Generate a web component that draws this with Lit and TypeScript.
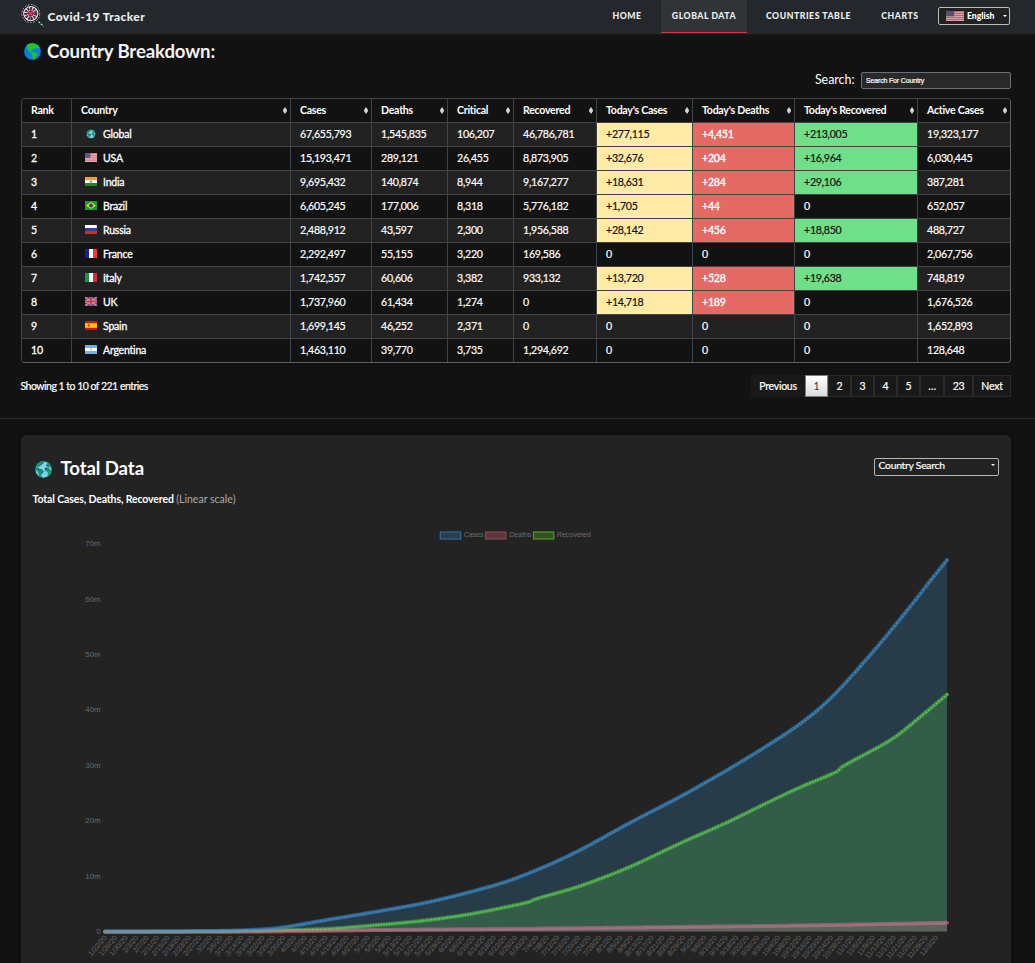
import { LitElement, html, css, svg } from "lit";
import { customElement, property } from "lit/decorators.js";
import { classMap } from "lit/directives/class-map.js";

const FLAGS: Record<string, any> = {
  usa: svg`<rect width="12" height="9" fill="#e6cdd0"/><path d="M0 .6H12M0 2.4H12M0 4.2H12M0 6H12M0 7.8H12" stroke="#cf6a75" stroke-width="1"/><rect width="5.4" height="4.8" fill="#5a5584"/>`,
  india: svg`<rect width="12" height="9" fill="#fff"/><rect width="12" height="3.2" fill="#ff9b3a"/><rect y="6" width="12" height="3" fill="#1d8a1b"/><circle cx="6" cy="4.6" r="1.2" fill="#8d8fd0"/>`,
  brazil: svg`<rect width="12" height="9" fill="#179a3c"/><path d="M6 1L11 4.5L6 8L1 4.5Z" fill="#e2d71c"/><circle cx="6" cy="4.5" r="1.9" fill="#263f86"/>`,
  russia: svg`<rect width="12" height="9" fill="#fff"/><rect y="3" width="12" height="3" fill="#1747a8"/><rect y="6" width="12" height="3" fill="#d52b1e"/>`,
  france: svg`<rect width="12" height="9" fill="#fff"/><rect width="4" height="9" fill="#10249a"/><rect x="8" width="4" height="9" fill="#ef3340"/>`,
  italy: svg`<rect width="12" height="9" fill="#fff"/><rect width="4" height="9" fill="#109648"/><rect x="8" width="4" height="9" fill="#d02f3a"/>`,
  uk: svg`<rect width="12" height="9" fill="#39407f"/><path d="M0 0L12 9M12 0L0 9" stroke="#cfb3c6" stroke-width="1.5"/><path d="M0 0L12 9M12 0L0 9" stroke="#c9415a" stroke-width=".6"/><path d="M6 0V9M0 4.5H12" stroke="#e0b6c2" stroke-width="2.8"/><path d="M6 0V9M0 4.5H12" stroke="#d03450" stroke-width="1.8"/>`,
  spain: svg`<rect width="12" height="9" fill="#c9151e"/><rect y="2.2" width="12" height="4.6" fill="#ffc400"/><rect x="2.8" y="3" width="2" height="2.8" fill="#b5652a"/>`,
  argentina: svg`<rect width="12" height="9" fill="#76aee0"/><rect y="3" width="12" height="3" fill="#fff"/><circle cx="6" cy="4.5" r="1.1" fill="#f2b95c"/>`,
};

const ROWS: string[][] = [
  ["Global", "global", "67,655,793", "1,545,835", "106,207", "46,786,781", "+277,115", "+4,451", "+213,005", "19,323,177"],
  ["USA", "usa", "15,193,471", "289,121", "26,455", "8,873,905", "+32,676", "+204", "+16,964", "6,030,445"],
  ["India", "india", "9,695,432", "140,874", "8,944", "9,167,277", "+18,631", "+284", "+29,106", "387,281"],
  ["Brazil", "brazil", "6,605,245", "177,006", "8,318", "5,776,182", "+1,705", "+44", "0", "652,057"],
  ["Russia", "russia", "2,488,912", "43,597", "2,300", "1,956,588", "+28,142", "+456", "+18,850", "488,727"],
  ["France", "france", "2,292,497", "55,155", "3,220", "169,586", "0", "0", "0", "2,067,756"],
  ["Italy", "italy", "1,742,557", "60,606", "3,382", "933,132", "+13,720", "+528", "+19,638", "748,819"],
  ["UK", "uk", "1,737,960", "61,434", "1,274", "0", "+14,718", "+189", "0", "1,676,526"],
  ["Spain", "spain", "1,699,145", "46,252", "2,371", "0", "0", "0", "0", "1,652,893"],
  ["Argentina", "argentina", "1,463,110", "39,770", "3,735", "1,294,692", "0", "0", "0", "128,648"],
];
const HEADS = ["Rank", "Country", "Cases", "Deaths", "Critical", "Recovered", "Today's Cases", "Today's Deaths", "Today's Recovered", "Active Cases"];

const globe = (water: string, land: string, rim: string) => svg`
  <circle cx="10" cy="10" r="9.3" fill="${water}" stroke="${rim}" stroke-width="1"/>
  <path d="M4 3Q7 .9 11 1.2L16 3.4L17 6L14.4 7L12.2 6.2L10.8 8L8.6 7.8L9.6 10.2L13 11L15.8 13L13.4 16L11.8 18.6L10 17L9.8 13.4L7.4 10.6L4.8 8L4 5.4Z" fill="${land}"/>`;
const globeAlt = svg`
  <circle cx="10" cy="10" r="9.2" fill="#7fd0ee" stroke="#0d2b33" stroke-width="1.2"/>
  <path d="M1.4 8Q3 3.4 7 1.6L11 1.4L8.6 4L5 6.6L4 8.4Z" fill="#129a68"/>
  <path d="M1.4 9.6L4.6 9.2L8 10.4L10 12.2L7.8 14.4L8 18.2L5 16.4L4.4 13Z" fill="#129a68"/>
  <path d="M12.8 1.6Q17.4 3.4 18.6 8L15.4 7.4L12.8 5.4L14 4Z" fill="#129a68"/>
  <path d="M12 8.4L15.6 9L18.4 11.4L16.8 15.4L14.4 16.8L14.6 13.4L12 11Z" fill="#129a68"/>
  <path d="M5 6.6L8.6 4L11 1.4M1.4 9.6L4.6 9.2L8 10.4L10 12.2L7.8 14.4M12.8 5.4L15.4 7.4M12 11L12 8.4L15.6 9" stroke="#15343a" stroke-width=".8" fill="none"/>`;

@customElement("flag-icon")
class FlagIcon extends LitElement {
  static styles = css`
    :host { display: inline-flex; width: 12px; height: 9px; justify-content: center; align-items: center; }
    .flag { width: 12px; height: 9px; display: block; }
    .globe { width: 10px; height: 10px; display: block; }
  `;
  @property() name = "";
  render() {
    return this.name === "global"
      ? html`<svg class="globe" viewBox="0 0 20 20">${globeAlt}</svg>`
      : html`<svg class="flag" viewBox="0 0 12 9" preserveAspectRatio="none">${FLAGS[this.name]}</svg>`;
  }
}

type Point = [number, number];
const CASES: Point[] = [[105, 931.6], [180, 931.2], [225, 930.8], [250, 930], [280, 927.7], [330, 919.3], [380, 911], [430, 901.7], [480, 889.3], [510, 880.3], [546.7, 865.7], [580, 850], [630, 822.7], [680, 796.7], [730, 768.3], [780, 737.5], [800, 723.8], [820, 708], [835, 693.8], [850, 677.8], [880, 643.5], [913, 603], [930, 581], [947, 560]];
const RECOVERED: Point[] = [[105, 931.8], [250, 931.3], [280, 930.3], [330, 928.7], [380, 924.7], [420, 921], [460, 915.7], [490, 910.3], [530, 901.7], [534, 899.5], [580, 886], [630, 866.7], [680, 843.3], [730, 821], [770, 801.3], [800, 787.3], [838, 771], [841.7, 767], [892, 739], [920, 717], [947, 694.5]];
const DEATHS: Point[] = [[105, 931.8], [280, 931.4], [380, 930], [530, 928.7], [660, 927.2], [800, 925.5], [947, 922.8]];
const DAYS = 320;

function sample(points: Point[]): Point[] {
  const slopes = points.map((_, i) => {
    const a = points[Math.max(0, i - 1)], b = points[Math.min(points.length - 1, i + 1)];
    return (b[1] - a[1]) / (b[0] - a[0]);
  });
  const out: Point[] = [];
  let k = 0;
  for (let d = 0; d <= DAYS; d++) {
    const x = 105 + (842 * d) / DAYS;
    while (k < points.length - 2 && x > points[k + 1][0]) k++;
    const [x0, y0] = points[k], [x1, y1] = points[k + 1];
    const w = x1 - x0, t = (x - x0) / w, t2 = t * t, t3 = t2 * t;
    const y = w < 8
      ? y0 + (y1 - y0) * t
      : (2 * t3 - 3 * t2 + 1) * y0 + (t3 - 2 * t2 + t) * w * slopes[k] + (-2 * t3 + 3 * t2) * y1 + (t3 - t2) * w * slopes[k + 1];
    out.push([x, y]);
  }
  return out;
}

@customElement("total-chart")
class TotalChart extends LitElement {
  static styles = css`
    :host { display: block; }
    .plot { display: block; width: 990px; height: 448px; }
    .label { font: 7.3px "Liberation Sans", Arial, sans-serif; fill: #6c6c6c; }
    .axis { font-size: 7.8px; }
    .date { font: 7.2px "Liberation Sans", Arial, sans-serif; fill: #666; }
  `;
  series(points: Point[], rgb: string, fill: number, dot: number) {
    const s = sample(points);
    const line = s.map(([x, y], i) => `${i ? "L" : "M"}${x.toFixed(2)} ${y.toFixed(2)}`).join("");
    const dots = s.map(([x, y]) => `M${x.toFixed(2)} ${y.toFixed(2)}h.01`).join("");
    return svg`
      <path d="${line}L947 931.6L105 931.6Z" fill="rgba(${rgb},${fill})"/>
      <path d="${line}" fill="none" stroke="rgba(${rgb},.48)" stroke-width="4" stroke-linecap="round" stroke-linejoin="round"/>
      <path d="${dots}" fill="none" stroke="rgba(${rgb},${dot})" stroke-width="2.1" stroke-linecap="round"/>`;
  }
  render() {
    const dates = [];
    for (let d = 0; d < DAYS - 3; d += 4) {
      const t = new Date(Date.UTC(2020, 0, 22 + d));
      const x = 107 + (842 * d) / DAYS;
      dates.push(svg`<text class="date" text-anchor="end" transform="translate(${x},938) rotate(-50)">${t.getUTCMonth() + 1}/${t.getUTCDate()}/20</text>`);
    }
    const legend: [string, number, string, string, number, number][] = [
      ["Cases", 440.3, "#2a3d4c", "#2b6e9e", 463.7, 20],
      ["Deaths", 485.6, "#5c373e", "#884652", 509.2, 22],
      ["Recovered", 533.5, "#35501f", "#4d9c26", 556.8, 34],
    ];
    return html`<svg class="plot" viewBox="21 515 990 448">
      ${legend.map(([name, x, fill, stroke, tx, w]) => svg`
        <rect x="${x}" y="532" width="20.3" height="7" fill="${fill}" stroke="${stroke}" stroke-width="1.2"/>
        <text class="label" x="${tx}" y="537.4" textLength="${w}">${name}</text>`)}
      ${[70, 60, 50, 40, 30, 20, 10, 0].map((v) => svg`<text class="label axis" text-anchor="end" x="100.5" y="${934 - v * 5.54}">${v ? v + "m" : "0"}</text>`)}
      ${this.series(RECOVERED, "98,219,42", 0.24, 0.9)}
      ${this.series(DEATHS, "255,110,135", 0.25, 0.4)}
      ${this.series(CASES, "62,156,225", 0.2, 0.6)}
      ${dates}
    </svg>`;
  }
}

@customElement("app-root")
class AppRoot extends LitElement {
  static styles = css`
    :host { display: block; width: 1035px; height: 963px; overflow: hidden; background: #121212; color: #fff; font-family: Lato, sans-serif; }
    * { box-sizing: border-box; }
    .nav { height: 34px; background: #24272c; display: flex; align-items: flex-start; padding-left: 21px; padding-right: 25px; box-shadow: 0 1px 8px rgba(40, 40, 40, .45); }
    .logo { width: 24px; height: 25px; margin-top: 4px; }
    .brand { font-size: 12px; font-weight: 900; letter-spacing: .38px; line-height: 34px; margin-left: 2.5px; flex: 1; color: #eee; }
    .link { height: 33px; line-height: 32px; font-size: 8.7px; font-weight: 900; letter-spacing: .54px; color: #f0f0f0; text-align: center; border-bottom: 1px solid transparent; white-space: nowrap; }
    .home { width: 68px; }
    .data { width: 86px; background: #303436; border-bottom-color: #dc3545; }
    .countries { width: 123px; }
    .charts { width: 60px; }
    .lang { width: 72px; height: 18px; margin-top: 7px; margin-left: 8px; border: 1px solid #bbb; border-radius: 2px; background: #222; display: flex; align-items: center; padding: 0 2px 1px 7px; font-size: 8.6px; font-weight: 900; }
    .lang-flag { width: 18px; height: 10px; margin-right: 3px; opacity: .9; }
    .caret { margin-left: auto; width: 0; height: 0; border: 2px solid transparent; border-top-color: #fff; border-bottom: 0; }
    .heading { display: flex; align-items: center; height: 34px; padding-left: 23px; font-size: 18.6px; font-weight: 700; letter-spacing: -.12px; color: #f4f4f4; }
    .heading-icon { width: 19px; height: 19px; margin: 1px 5px 0 0; }
    .search { height: 30px; display: flex; justify-content: flex-end; align-items: flex-start; padding: 4px 24px 0 0; font-size: 12.4px; }
    .word { line-height: 15px; }
    .field { width: 150px; height: 17px; margin-left: 6.5px; border: 1px solid #6a7078; border-radius: 2px; background: #292929; color: #fff; font: 7px "Liberation Sans", Arial, sans-serif; line-height: 16px; padding-left: 4px; letter-spacing: -.16px; -webkit-text-stroke: .2px #fff; }
    .table { table-layout: fixed; width: 990px; margin: 0 0 0 21px; border-collapse: separate; border-spacing: 0; border: 1px solid #59606a; border-width: 0 1px 1px 0; border-radius: 4px; overflow: hidden; font-size: 10.6px; letter-spacing: -.26px; }
    .table th, .table td { height: 24px; padding: 0 0 1px 9px; border-left: 1px solid #3f4449; border-top: 1px solid #3f4449; text-align: left; line-height: 15px; white-space: nowrap; font-weight: 400; -webkit-text-stroke: .2px currentColor; }
    .table th { font-weight: 700; -webkit-text-stroke: 0; letter-spacing: -.27px; }
    .table th:first-child { border-top-left-radius: 4px; }
    .table tr:nth-child(odd) td { background: #222; }
    .table td.strong, .table td.country { -webkit-text-stroke: .3px currentColor; letter-spacing: -.2px; font-size: 10.5px; }
    .table tr td.yellow { background: #ffeba6; color: #111; }
    .table tr td.red { background: #e56a66; -webkit-text-stroke: .35px currentColor; }
    .table tr td.green { background: #6fdf8a; color: #111; }
    .headcell { display: flex; align-items: center; justify-content: space-between; padding-right: 3px; }
    .sort { width: 4px; height: 7px; fill: #d8d8d8; }
    .named { display: flex; align-items: center; gap: 6px; padding-left: 4px; }
    .named flag-icon { margin-top: -1px; }
    .w0 { width: 50px; } .w1 { width: 219px; } .w2 { width: 81px; } .w3 { width: 76px; } .w4 { width: 66px; }
    .w5 { width: 83px; } .w6 { width: 96px; } .w7 { width: 102px; } .w8 { width: 123px; } .w9 { width: 93px; }
    .foot { display: flex; justify-content: space-between; padding: 12px 24px 0 20.5px; height: 55px; font-size: 10.5px; letter-spacing: -.25px; -webkit-text-stroke: .2px #fff; }
    .showing { line-height: 23px; letter-spacing: -.51px; }
    .pages { display: flex; height: 22px; line-height: 20px; }
    .page { border: 1px solid #2b2b2b; background: #191919; text-align: center; width: 23px; }
    .page.current { background: linear-gradient(#fff, #dcdcdc); color: #333; border-color: #777d88; -webkit-text-stroke: 0; }
    .page.prev { width: 54px; border-color: #191919; }
    .page.dots { width: 24px; } .page.last { width: 29px; } .page.next { width: 38px; }
    .rule { height: 1px; background: #2b2b2b; margin-bottom: 16px; }
    .card { width: 990px; height: 560px; margin-left: 21px; background: #232323; border-radius: 6px; box-shadow: 0 0 14px rgba(0, 0, 0, .3); }
    .card-head { display: flex; height: 55px; padding: 10px 12px 0 13px; align-items: center; }
    .card-icon { width: 19px; height: 19px; margin: 3px 7.5px 0 0; }
    .title { font-size: 18.6px; font-weight: 700; letter-spacing: -.1px; flex: 1; line-height: 24px; padding-top: 1px; }
    .select { width: 125px; height: 18px; margin-bottom: 2px; border: 1px solid #b5b5b5; border-radius: 2px; display: flex; align-items: center; padding: 0 3px 3px 3.5px; font-size: 10.3px; letter-spacing: -.23px; -webkit-text-stroke: .2px #fff; }
    .sub { height: 25px; padding-left: 11.5px; line-height: 19px; font-size: 10.5px; font-weight: 700; letter-spacing: -.12px; }
    .scale { font-weight: 400; color: #aaa; letter-spacing: .02px; }
  `;
  tint(i: number, v: string) {
    const hot = v !== "0";
    return classMap({ yellow: hot && i === 4, red: hot && i === 5, green: hot && i === 6 });
  }
  render() {
    return html`
      <nav class="nav">
        <svg class="logo" viewBox="0 0 24 25">
          <circle cx="9.8" cy="9.6" r="8.3" fill="#dce8ee" stroke="#0d0d0f" stroke-width="1.2"/>
          <circle cx="9.8" cy="9.6" r="8.9" fill="none" stroke="#cfd6da" stroke-width=".8" stroke-dasharray="2 1.2"/>
          <circle cx="9.8" cy="9.6" r="5" fill="none" stroke="#5b2a42" stroke-width="3" stroke-dasharray="1.9 .9"/>
          <circle cx="9.8" cy="9.6" r="3" fill="#c42a4e"/>
          <path d="M9.8 3.2V16M3.4 9.6H16.2" stroke="#4a2537" stroke-width=".9"/>
          <circle cx="9.8" cy="9.6" r="1.5" fill="#ee365c"/>
          <path d="M16.6 16.8L23 22.8" stroke="#0b1a18" stroke-width="2.6"/>
          <path d="M17.4 17.5L22.6 22.4" stroke="#8ae5cb" stroke-width="1.3" stroke-dasharray="2.4 .8"/>
        </svg>
        <div class="brand">Covid-19 Tracker</div>
        <div class="link home">HOME</div>
        <div class="link data">GLOBAL DATA</div>
        <div class="link countries">COUNTRIES TABLE</div>
        <div class="link charts">CHARTS</div>
        <div class="lang"><svg class="lang-flag" viewBox="0 0 12 9" preserveAspectRatio="none">${FLAGS.usa}</svg>English<i class="caret"></i></div>
      </nav>
      <div class="heading"><svg class="heading-icon" viewBox="0 0 20 20">${globe("#0c7fe0", "#1fc526", "#06131f")}</svg>Country Breakdown:</div>
      <div class="search"><span class="word">Search:</span><div class="field">Search For Country</div></div>
      <table class="table">
        <colgroup>${HEADS.map((_, i) => html`<col class="w${i}">`)}</colgroup>
        <thead><tr>${HEADS.map((h, i) => html`<th><div class="headcell">${h}${i ? html`<svg class="sort" viewBox="0 0 4 7"><path d="M2 0L4 3.1H0ZM2 7L0 3.9H4Z"/><path d="M.1 3h3.8v1H.1z"/></svg>` : ""}</div></th>`)}</tr></thead>
        <tbody>${ROWS.map((r, n) => html`<tr>
          <td class="strong">${n + 1}</td>
          <td class="country"><div class="named"><flag-icon name=${r[1]}></flag-icon>${r[0]}</div></td>
          ${r.slice(2).map((v, i) => html`<td class=${this.tint(i, v)}>${v}</td>`)}
        </tr>`)}</tbody>
      </table>
      <div class="foot">
        <div class="showing">Showing 1 to 10 of 221 entries</div>
        <div class="pages">
          <div class="page prev">Previous</div><div class="page current">1</div><div class="page">2</div><div class="page">3</div><div class="page">4</div><div class="page">5</div><div class="page dots">…</div><div class="page last">23</div><div class="page next">Next</div>
        </div>
      </div>
      <div class="rule"></div>
      <section class="card">
        <div class="card-head">
          <svg class="card-icon" viewBox="0 0 20 20">${globeAlt}</svg>
          <div class="title">Total Data</div>
          <div class="select">Country Search<i class="caret"></i></div>
        </div>
        <div class="sub">Total Cases, Deaths, Recovered <span class="scale">(Linear scale)</span></div>
        <total-chart></total-chart>
      </section>`;
  }
}
